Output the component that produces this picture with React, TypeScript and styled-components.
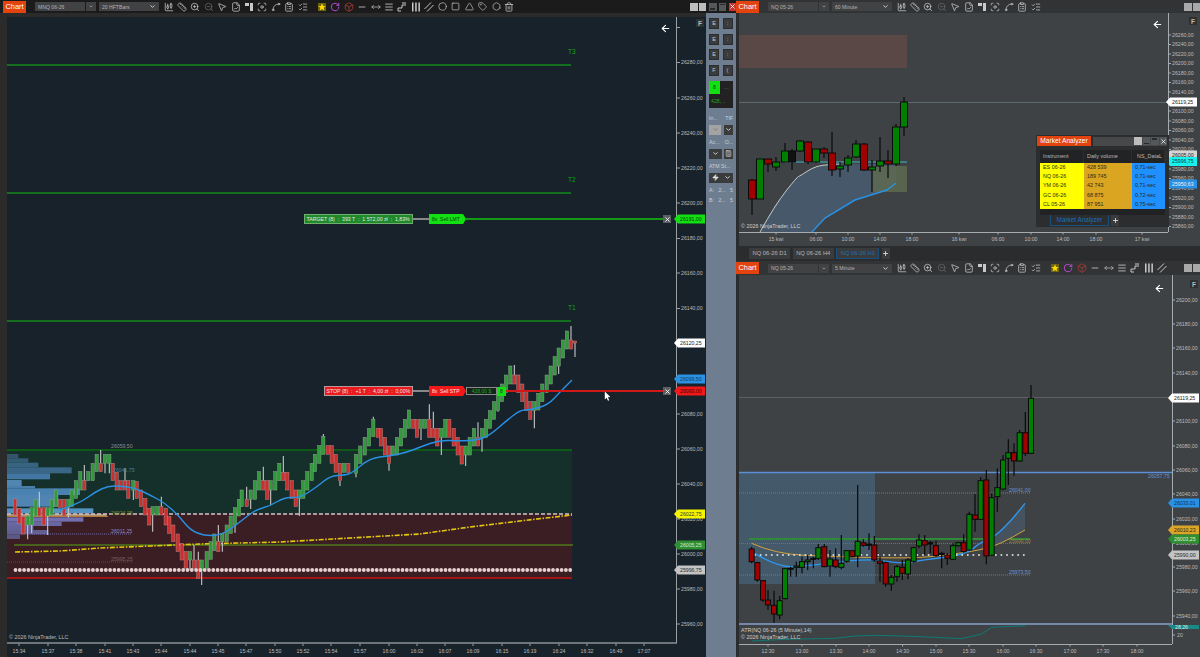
import React from 'react';
import styled, { createGlobalStyle } from 'styled-components';
import {
  ArrowLeft, Box, Calculator, ChartCandlestick, ChevronDown, ClipboardList, FileChartLine, Focus,
  Hexagon, ListChecks, Menu, Minus, MousePointer2, MoveHorizontal, Plus, RotateCw, Ruler, Spline,
  Square, Tag, Trash2, Triangle, Circle, X, Zap, ZoomIn, ZoomOut,
} from 'lucide-react';

const GlobalStyle = createGlobalStyle`
  html, body { margin: 0; padding: 0; background: #1c1c1c; }
  * { box-sizing: border-box; }
`;

const Page = styled.div`
  display: flex;
  width: 1200px;
  height: 657px;
  overflow: hidden;
  font-family: 'Liberation Sans', Arial, sans-serif;
`;

const LeftWindow = styled.div`
  display: flex;
  flex-direction: column;
  width: 736px;
  flex: none;
  background: #2b2b2c;
`;

const RightColumn = styled.div`
  position: relative;
  display: flex;
  flex-direction: column;
  flex: 1;
  min-width: 0;
  background: #2b2c2e;
`;

const Bar = styled.div<{ $dark?: boolean; $h: number; $pad: number }>`
  display: flex;
  align-items: center;
  flex: none;
  height: ${p => p.$h}px;
  padding-left: ${p => p.$pad}px;
  background: ${p => (p.$dark ? '#1b1b1c' : '#313335')};
  overflow: hidden;
`;

const ChartTab = styled.div`
  flex: none;
  width: 23px;
  height: 12px;
  background: #e2430f;
  color: #fff;
  font-size: 7.4px;
  line-height: 12px;
  text-align: center;
`;

const Combo = styled.div<{ $w: number; $ml: number }>`
  display: flex;
  align-items: center;
  justify-content: space-between;
  flex: none;
  width: ${p => p.$w}px;
  height: 9px;
  margin-left: ${p => p.$ml}px;
  padding: 0 3px;
  background: #414244;
  color: #b5b5b5;
  font-size: 5.1px;
  svg { color: #d8d8d8; }
`;

const ToolGroup = styled.div<{ $ml: number }>`
  display: flex;
  flex: none;
  margin-left: ${p => p.$ml}px;
`;

const ToolCell = styled.span<{ $c?: string }>`
  display: flex;
  align-items: center;
  justify-content: center;
  width: 13.4px;
  height: 12px;
  color: ${p => p.$c || '#c9c9c9'};
`;

const WindowButtons = styled.div`
  display: flex;
  align-items: center;
  gap: 1px;
  margin-left: auto;
  flex: none;
`;

const WinBtn = styled.div<{ $c?: string; $ml?: number }>`
  display: flex;
  align-items: center;
  justify-content: center;
  width: 7.5px;
  height: 8px;
  margin-left: ${p => p.$ml || 0}px;
  background: ${p => p.$c || '#bdbdbd'};
  color: #fff;
`;

const WinGlyph = styled.div<{ $top?: boolean }>`
  width: 5px;
  height: 1.5px;
  background: #2a2a2a;
  align-self: ${p => (p.$top ? 'flex-start' : 'flex-end')};
  margin: 1px 0;
`;

const Body = styled.div`
  position: relative;
  display: flex;
  flex: 1;
  min-height: 0;
`;

const ChartPane = styled.div`
  position: relative;
  flex: 1;
  margin: 4px 0 0 7px;
  background: #18222a;
`;

const ChartSvg = styled.svg`
  display: block;
`;

const RightChart = styled.div<{ $h: number }>`
  flex: none;
  height: ${p => p.$h}px;
  padding-left: 3px;
  background: #2b2c2e;
`;

const ChartText = styled.text<{ $c?: string; $s?: number }>`
  font-family: 'Liberation Sans', Arial, sans-serif;
  font-size: ${p => p.$s || 5.2}px;
  fill: ${p => p.$c || '#bcbcbc'};
`;

const FBox = styled.div<{ $left: number; $top: number }>`
  position: absolute;
  left: ${p => p.$left}px;
  top: ${p => p.$top}px;
  display: flex;
  align-items: center;
  justify-content: center;
  width: 8px;
  height: 8px;
  background: #2f3030;
  color: #bbb;
  font-size: 6.5px;
  font-weight: bold;
`;

const BackArrow = styled.div<{ $left: number; $top: number }>`
  position: absolute;
  left: ${p => p.$left}px;
  top: ${p => p.$top}px;
  color: #fff;
  line-height: 0;
`;

const OrderRow = styled.div<{ $left: number; $top: number }>`
  position: absolute;
  left: ${p => p.$left}px;
  top: ${p => p.$top}px;
  display: flex;
  align-items: center;
  height: 10px;
`;

const OrderBox = styled.div<{ $w: number; $bg: string; $edge: string }>`
  width: ${p => p.$w}px;
  height: 10px;
  background: ${p => p.$bg};
  border: 1px solid ${p => p.$edge};
  color: #e8e8e8;
  font-size: 5.2px;
  line-height: 8px;
  padding-left: 1.5px;
  white-space: pre;
  overflow: hidden;
`;

const Connector = styled.div`
  width: 16px;
  height: 1.5px;
  background: #888;
`;

const OrderFlag = styled.div<{ $bg: string; $c: string }>`
  width: 37px;
  height: 10px;
  background: ${p => p.$bg};
  color: ${p => p.$c};
  font-size: 5px;
  line-height: 10px;
  padding-left: 3px;
  white-space: pre;
  clip-path: polygon(0 0, 92% 0, 100% 50%, 92% 100%, 0 100%);
`;

const PnlBox = styled.div`
  width: 31px;
  height: 8px;
  background: #16251c;
  border: 1px solid #8a8a8a;
  color: #1ca51c;
  font-size: 5px;
  line-height: 6px;
  text-align: center;
`;

const PnlQty = styled.div`
  width: 9px;
  height: 9px;
  background: #13e013;
  color: #123;
  font-size: 5px;
  line-height: 9px;
  text-align: center;
`;

const CloseBox = styled.div<{ $left: number; $top: number }>`
  position: absolute;
  left: ${p => p.$left}px;
  top: ${p => p.$top}px;
  display: flex;
  align-items: center;
  justify-content: center;
  width: 8px;
  height: 8px;
  background: #5b5f64;
  color: #fff;
`;

const TraderPanel = styled.div`
  display: flex;
  flex-direction: column;
  width: 30px;
  flex: none;
  padding: 5px 3px 0;
  background: #6e7e90;
`;

const QtyGrid = styled.div`
  display: grid;
  grid-template-columns: 10px 10px;
  grid-auto-rows: 11px;
  column-gap: 3.5px;
  row-gap: 4.5px;
`;

const QtyBtn = styled.div`
  background: #3a3b3d;
  border: 1px solid #2c2d2f;
  color: #ccc;
  font-size: 5.5px;
  line-height: 9px;
  text-align: center;
`;

const PositionBox = styled.div`
  display: grid;
  grid-template-columns: 11px 13px;
  grid-template-rows: 13px 14px;
  width: 24px;
  margin-top: 5px;
  background: #222;
  font-size: 5.2px;
`;

const PosQty = styled.div`
  background: #13e013;
  color: #0d3d0d;
  line-height: 13px;
  text-align: center;
`;

const PosMore = styled.div`
  color: #888;
  line-height: 13px;
  text-align: center;
`;

const PosPnl = styled.div`
  grid-column: 1 / 3;
  color: #1ca51c;
  line-height: 14px;
  padding-left: 2px;
`;

const FieldLabels = styled.div<{ $mt: number }>`
  display: flex;
  justify-content: space-between;
  margin-top: ${p => p.$mt}px;
  color: #c9d0d8;
  font-size: 5.2px;
  line-height: 7px;
  white-space: nowrap;
`;

const FieldRow = styled.div`
  display: flex;
  justify-content: space-between;
  margin-top: 3px;
  height: 10px;
`;

const FieldBtn = styled.div<{ $w: number; $light?: boolean }>`
  display: flex;
  align-items: center;
  justify-content: space-around;
  width: ${p => p.$w}px;
  background: ${p => (p.$light ? '#a3a3a3' : '#3a3b3d')};
  color: ${p => (p.$light ? '#777' : '#e4e4e4')};
`;

const TabStrip = styled.div`
  display: flex;
  align-items: center;
  flex: none;
  height: 16px;
  padding-left: 13px;
  gap: 2.5px;
`;

const ChartTabItem = styled.div<{ $active?: boolean }>`
  height: 11px;
  padding: 0 3.5px;
  background: #3a3b3d;
  border: ${p => (p.$active ? '1px solid #1c4f7c' : '0')};
  border-top-width: 0;
  color: ${p => (p.$active ? '#1b70b8' : '#b5b5b5')};
  font-size: 5.8px;
  line-height: 11px;
  white-space: nowrap;
`;

const AddTab = styled.div`
  display: flex;
  align-items: center;
  justify-content: center;
  width: 8px;
  height: 11px;
  background: #3a3b3d;
  color: #ddd;
`;

const Analyzer = styled.div`
  position: absolute;
  left: 300px;
  top: 135px;
  display: flex;
  flex-direction: column;
  width: 133px;
  height: 92px;
  padding: 1px 2px 0 1px;
  background: #2c2d2f;
`;

const AnalyzerTitle = styled.div`
  display: flex;
  align-items: center;
  height: 10px;
`;

const AnalyzerTab = styled.div`
  width: 54px;
  height: 10px;
  background: #e2430f;
  color: #fff;
  font-size: 6.6px;
  line-height: 10px;
  text-align: center;
`;

const AnalyzerHandle = styled.div`
  display: flex;
  align-items: center;
  justify-content: flex-end;
  gap: 1px;
  flex: 1;
  height: 9px;
  margin-left: 2px;
  background: #47484a;
`;

const Table = styled.div`
  display: grid;
  grid-template-columns: 44px 48px 33px;
  margin: 4px 0 0 3px;
  font-size: 5.4px;
`;

const HeadCell = styled.div<{ $center?: boolean }>`
  height: 13px;
  margin-right: 1px;
  padding-left: 3px;
  background: #222325;
  color: #b9b9b9;
  line-height: 13px;
  white-space: nowrap;
  text-align: ${p => (p.$center ? 'center' : 'left')};
`;

const Cell = styled.div<{ $bg: string }>`
  height: 9.2px;
  padding-left: 3px;
  background: ${p => p.$bg};
  color: #2a2a18;
  line-height: 9.2px;
`;

const TableFoot = styled.div`
  grid-column: 1 / 4;
  height: 6px;
  background: #212224;
`;

const AnalyzerTabs = styled.div`
  display: flex;
  align-items: center;
  gap: 2px;
  margin: 0 0 0 13px;
`;

const AnalyzerTabItem = styled.div`
  width: 59px;
  height: 11px;
  border: 1px solid #1c4f7c;
  border-top: 0;
  color: #1b70b8;
  font-size: 6.4px;
  line-height: 10px;
  text-align: center;
`;

type Bars = [number, number, number, string, number?][];

// renko bars read off the chart: x, body top, body bottom, colour, wick end
const barsA: Bars = [
  [45,177,225,'r'],[58,205,250,'r'],[70,230,282,'r'],[83,228,255,'g',298],[95,203,255,'g',280],[107,178,228,'g'],[118,203,228,'r',155],
  [131,203,255,'r'],[143,203,228,'g',285],[155,178,225,'g'],[168,150,200,'g'],[180,178,203,'r'],[192,178,228,'r'],[205,178,203,'g',233],
  [215,150,200,'g'],[228,122,175,'g'],[241,95,150,'g'],[253,122,150,'r',75],[265,95,122,'g'],[278,70,122,'g'],[290,43,95,'g'],
  [302,70,95,'r',30],[315,43,70,'g',100],[328,43,70,'g',100],[338,70,122,'r'],[350,97,150,'r'],[362,122,150,'r'],[375,122,150,'r',85],
  [385,122,175,'r'],[400,122,150,'g',180],[410,125,175,'r'],[423,150,200,'r'],[436,175,225,'r'],[448,205,255,'r'],[458,200,225,'g',275],
  [472,200,225,'g'],[484,200,225,'r',170],[497,205,255,'r'],[508,230,280,'r'],[520,255,305,'r'],[533,282,335,'r'],[545,310,360,'r'],
  [557,335,385,'r'],[570,335,360,'g',390],[582,360,385,'r',315],[595,360,415,'r',335],[605,360,390,'g',435],[620,335,385,'g'],
  [632,305,358,'g'],[643,282,332,'g'],[655,305,335,'r',255],[667,280,305,'g',335],[680,255,305,'g'],[692,228,280,'g'],[705,203,255,'g',278],
  [717,178,228,'g'],[725,150,200,'g'],[740,178,200,'r',140],[752,150,178,'g',207],[765,122,178,'g'],[777,95,150,'g'],[790,122,150,'r',80],
  [802,122,178,'r'],[812,122,150,'g',195],[826,95,150,'g'],[838,70,122,'g'],[850,97,122,'r',48],[862,97,150,'r'],[875,122,175,'r'],
  [887,150,200,'r'],[898,150,175,'g',228],[910,122,175,'g'],[922,95,150,'g'],[935,70,122,'g'],[945,43,95,'g'],[958,17,70,'g'],[970,-10,43,'g',-18],
  [983,17,43,'r'],[995,17,70,'r'],[1007,43,97,'r'],[1020,70,122,'r',138],[1032,70,97,'g'],[1045,70,97,'r'],
];

const barsB: Bars = [
  [18,283,340,'g',352],[31,258,310,'g'],[44,232,285,'g'],[57,205,258,'g'],[70,178,230,'g',170],[83,205,232,'r'],[93,205,258,'r'],
  [105,232,285,'r'],[117,258,310,'r',332],[128,258,285,'g'],[141,232,285,'g'],[153,205,258,'g'],[165,178,232,'g'],[177,150,205,'g'],
  [190,178,205,'r'],[201,178,232,'r'],[213,178,205,'g',240],[225,178,205,'g'],[238,178,232,'r',133],[250,205,232,'r',155],[262,205,258,'r'],
  [274,205,232,'g',285],[286,178,232,'g'],[298,178,232,'r'],[311,205,258,'r'],[323,232,285,'r'],[335,258,312,'r'],[347,258,285,'g',318],
  [359,232,285,'g'],[372,205,258,'g'],[384,232,258,'r',187],[396,205,232,'g',275],[408,178,232,'g'],[420,152,205,'g'],[432,125,178,'g'],
  [444,98,152,'g',155],[456,72,125,'g'],[468,45,98,'g'],[481,18,72,'g'],[493,45,72,'r',15],[505,45,98,'r'],[517,72,125,'r'],[529,98,152,'r'],
  [541,125,178,'r'],[553,125,152,'g',205],[565,100,150,'g'],[577,72,125,'g'],[590,45,98,'g'],[602,18,72,'g'],[614,-10,45,'g'],[626,-36,18,'g',42],
];

const barsC: Bars = [[563,340,358,'g'],[567,331,349,'g'],[571,340,349,'r',326],[575,341,343,'r',357]];

const renkoBars = [
  ...barsA.map(([x, t, b, c, w]) => ({ x: x / 3, t: 440 + t / 3, b: 440 + b / 3, c, w: w === undefined ? undefined : 440 + w / 3 })),
  ...barsB.map(([x, t, b, c, w]) => ({ x: 350 + x / 3, t: 360 + t / 3, b: 360 + b / 3, c, w: w === undefined ? undefined : 360 + w / 3 })),
  ...barsC.map(([x, t, b, c, w]) => ({ x, t, b, c, w })),
];

const profileRows: [number, number, number, string][] = [
  [42,13,55,'#365a72'],[55,13,85,'#37607c'],[68,14,115,'#3b6a8a'],[82,18,215,'#3d6d90'],[100,18,150,'#4780b0'],[120,18,65,'#5690bf'],
  [138,7,105,'#4f88b8'],[145,20,240,'#4f8cc0'],[165,35,175,'#568fc2'],[205,15,280,'#5b9dd0'],[222,8,320,'#c09a78'],[232,13,250,'#7a78c0'],
  [245,13,185,'#6f6fb0'],[258,12,100,'#6a6aa8'],[270,13,145,'#66669f'],[283,14,60,'#5f5f8f'],
];

const targets: [number, string, number][] = [[65, 'T3', 52], [193, 'T2', 180], [321, 'T1', 308]];

const pts = (a: number[][]) => a.map(p => p.join(',')).join(' ');
const fromZoom = (a: number[][]) => a.map(([x, y]) => [735 + x / 3, 380 + y / 3]);

// rounds a point list into a curve through the midpoints
const smooth = (a: number[][]) => {
  let d = `M${a[0][0]} ${a[0][1]}`;
  for (let i = 1; i < a.length - 1; i++) {
    const mx = (a[i][0] + a[i + 1][0]) / 2;
    const my = (a[i][1] + a[i + 1][1]) / 2;
    d += ` Q${a[i][0]} ${a[i][1]} ${mx} ${my}`;
  }
  const last = a[a.length - 1];
  return `${d} L${last[0]} ${last[1]}`;
};

const blueLine = [[60,510],[80,503],[95,492],[108,486],[120,486],[135,488],[150,495],[165,503],[180,517],[190,530],[205,536],[222,535],[240,522],[255,510],[270,506],[285,497],[300,498],[318,486],[330,476],[345,475],[352,473],[370,458],[390,456],[408,452],[420,447],[440,440],[460,441],[478,440],[490,435],[505,422],[520,410],[530,410],[548,405],[560,392],[572,380]];
const yellowLine = [[15,552],[60,551],[100,548],[150,546],[200,544],[280,542],[350,538],[420,534],[470,527],[520,521],[572,515]];

const leftAxis: [number, string][] = [[62.5,'26280,00'],[98,'26260,00'],[133,'26240,00'],[168,'26220,00'],[203,'26200,00'],[238.5,'26180,00'],[273,'26160,00'],[308.5,'26140,00'],[414,'26080,00'],[449,'26060,00'],[484,'26040,00'],[519,'26020,00'],[554,'26000,00'],[589,'25980,00'],[624,'25960,00']];
const leftTimes: [number, string][] = [[19,'15:34'],[48,'15:37'],[76,'15:38'],[105,'15:41'],[133,'15:43'],[161,'15:44'],[190,'15:44'],[218,'15:45'],[246,'15:47'],[275,'15:50'],[303,'15:52'],[331,'15:54'],[360,'15:57'],[389,'16:00'],[417,'16:02'],[445,'16:07'],[473,'16:09'],[502,'16:15'],[530,'16:19'],[559,'16:24'],[587,'16:32'],[616,'16:49'],[644,'17:07']];

const topAxis: [number, string][] = [[35,'26260,00'],[44.5,'26240,00'],[54,'26220,00'],[63.5,'26200,00'],[73,'26180,00'],[82.5,'26160,00'],[92,'26140,00'],[111,'26100,00'],[121,'26080,00'],[130.5,'26060,00'],[140,'26040,00'],[149.5,'26020,00'],[169,'25980,00'],[178.5,'25960,00'],[188.5,'25940,00'],[198,'25920,00'],[207.5,'25900,00'],[217,'25880,00'],[226.5,'25860,00']];
const topTimes: [number, string][] = [[776,'15 kwi'],[816,'06:00'],[848,'10:00'],[880,'14:00'],[912,'18:00'],[959,'16 kwi'],[998,'06:00'],[1031,'10:00'],[1063,'14:00'],[1096,'18:00'],[1142,'17 kwi']];

const bottomAxis: [number, string][] = [[300,'26200,00'],[324,'26180,00'],[348,'26160,00'],[373,'26140,00'],[421,'26100,00'],[446,'26080,00'],[470,'26060,00'],[494,'26040,00'],[519,'26020,00'],[543.5,'26000,00'],[567,'25980,00'],[591,'25960,00'],[616,'25940,00']];
const bottomTimes: [number, string][] = [[768,'12:30'],[802,'13:00'],[836,'13:30'],[869,'14:00'],[902.6,'14:30'],[936,'15:00'],[969,'15:30'],[1003,'16:00'],[1036,'16:30'],[1070,'17:00'],[1103,'17:30'],[1137,'18:00']];

// x, body top, body bottom, colour, wick top, wick bottom (all real px)
const hourCandles: [number, number, number, string, number, number][] = [
  [752,180,199,'r',179,215],[760,159,199,'g',159,199],[768,159,164,'r',159,172],[776,162,167,'g',157,171],[785,151,162,'g',143,162],
  [792,151,162,'b',149,170],[800,141,151,'g',140,152],[808,142,162,'r',141,164],[816,149,162,'g',149,163],[824,149,153,'r',147,158],
  [832,153,170,'r',132,176],[840,166,169,'g',162,177],[848,158,165,'g',155,172],[856,144,157,'g',140,158],[864,144,170,'r',143,171],
  [872,167,170,'g',160,192],[880,161,166,'g',137,172],[888,161,164,'r',150,178],[896,127,164,'g',124,166],[904,102,127,'g',97,136],
];

// same, read off the zoomed crop of the 5 minute chart
const minuteCandles: [number, number, number, string, number, number][] = [
  [50,507,545,'r',500,550],[67,548,600,'r',545,605],[84,602,660,'r',600,665],[99,660,675,'r',630,690],[117,676,702,'r',632,728],
  [134,662,705,'g',648,718],[150,566,656,'g',565,658],[167,565,568,'g',560,590],[184,558,562,'g',545,590],[201,545,562,'g',530,580],
  [218,540,545,'g',525,570],[235,535,538,'b',530,565],[250,503,535,'g',492,540],[268,500,560,'r',492,562],[285,537,558,'g',510,590],
  [302,540,560,'r',505,565],[319,550,562,'g',465,568],[335,512,544,'g',510,548],[352,512,530,'r',510,532],[368,484,528,'g',315,562],
  [385,488,496,'r',478,500],[402,492,496,'b',460,510],[418,495,540,'r',468,545],[435,543,550,'r',530,605],[452,548,612,'r',545,620],
  [469,592,612,'g',585,632],[486,560,590,'g',555,605],[502,562,580,'r',540,600],[519,540,582,'g',535,598],[536,503,544,'g',500,548],
  [552,480,498,'g',463,505],[569,482,495,'r',465,524],[586,488,492,'b',483,520],[603,497,527,'r',482,530],[620,520,524,'b',515,565],
  [637,525,535,'r',520,555],[654,497,538,'g',490,540],[670,488,497,'g',485,500],[686,488,515,'r',463,518],[703,403,510,'g',395,512],
  [720,405,418,'r',342,455],[737,302,418,'g',292,420],[754,300,528,'r',270,553],[770,353,526,'g',340,528],[787,323,350,'g',265,395],
  [804,240,327,'g',225,330],[820,218,235,'g',178,315],[837,218,243,'r',190,287],[854,158,243,'g',150,245],[871,158,220,'r',96,228],
  [888,55,220,'g',15,222],
];

const candleFill: Record<string, string> = { g: '#008000', r: '#a00000', b: '#111' };

const Candles = ({ data, w, map }: { data: typeof hourCandles; w: number; map: (x: number, y: number) => [number, number] }) => (
  <g stroke="#0a0a0a" strokeWidth={1}>
    {data.map(([x, t, b, c, wt, wb], i) => {
      const [cx, top] = map(x, t);
      const [, bot] = map(x, b);
      const [, wTop] = map(x, wt);
      const [, wBot] = map(x, wb);
      return (
        <g key={i}>
          <line x1={cx} x2={cx} y1={wTop} y2={wBot} strokeWidth={1.2} />
          <rect x={cx - w / 2} y={top} width={w} height={bot - top} fill={candleFill[c]} />
        </g>
      );
    })}
  </g>
);

const PriceTag = ({ x, y, bg, fg, label }: { x: number; y: number; bg: string; fg: string; label: string }) => (
  <g>
    <polygon points={`${x},${y} ${x + 4},${y - 4.5} ${x + 31},${y - 4.5} ${x + 31},${y + 4.5} ${x + 4},${y + 4.5}`} fill={bg} />
    <ChartText x={x + 6} y={y + 1.9} $c={fg}>{label}</ChartText>
  </g>
);

const AxisLabels = ({ x, data, tick }: { x: number; data: [number, string][]; tick: string }) => (
  <g>
    {data.map(([y, label]) => (
      <g key={y}>
        <line x1={x} x2={x + 3} y1={y} y2={y} stroke={tick} />
        <ChartText x={x + 4} y={y + 1.9}>{label}</ChartText>
      </g>
    ))}
  </g>
);

const TimeLabels = ({ y, data, tick }: { y: number; data: [number, string][]; tick: string }) => (
  <g>
    {data.map(([x, label]) => (
      <g key={x}>
        <line x1={x} x2={x} y1={y} y2={y + 2.5} stroke={tick} />
        <ChartText x={x} y={y + 9} textAnchor="middle">{label}</ChartText>
      </g>
    ))}
  </g>
);

const MainPlot = () => (
  <ChartSvg width={699} height={640} viewBox="7 17 699 640">
    <rect x={7} y={450} width={565} height={63} fill="#15302a" />
    <rect x={7} y={513} width={565} height={65} fill="#3a1e24" />
    {profileRows.map(([y, h, w, c]) => (
      <rect key={y} x={7} y={440 + y / 3} width={w / 3 - 7} height={h / 3} fill={c} opacity={0.9} />
    ))}
    <line x1={7} x2={572} y1={450} y2={450} stroke="#0d5a18" strokeWidth={2} />
    <line x1={7} x2={572} y1={578} y2={578} stroke="#a51414" strokeWidth={2} />
    <line x1={7} x2={572} y1={514} y2={514} stroke="#c9c9c9" strokeWidth={1.6} strokeDasharray="4 2" />
    <line x1={7} x2={108} y1={516.5} y2={516.5} stroke="#b07a3a" strokeWidth={1} />
    <line x1={30} x2={132} y1={534} y2={534} stroke="#7d7cc4" strokeWidth={0.8} strokeDasharray="1 1" />
    <line x1={7} x2={132} y1={562} y2={562} stroke="#7a4a4a" strokeWidth={0.8} strokeDasharray="1 1" />
    <line x1={14} x2={573} y1={545} y2={545} stroke="#4f7a18" strokeWidth={1.6} />
    {targets.map(([y, t, ty]) => (
      <g key={t}>
        <line x1={7} x2={571} y1={y} y2={y} stroke="#128a1c" strokeWidth={1.4} />
        <ChartText x={568} y={ty + 2} $c="#12a812" $s={6.5}>{t}</ChartText>
      </g>
    ))}
    <polyline points={pts(yellowLine)} fill="none" stroke="#e4c60e" strokeWidth={1.6} strokeDasharray="5 1.5 1.5 1.5" />
    <g>
      {renkoBars.map((b, i) => (
        <g key={i}>
          {b.w !== undefined && (
            <line x1={b.x} x2={b.x} y1={b.w < b.t ? b.w : b.b} y2={b.w < b.t ? b.t : b.w} stroke="#c8c8c8" strokeWidth={1.1} />
          )}
          <rect x={b.x - 1.6} y={b.t} width={3.2} height={b.b - b.t} fill={b.c === 'g' ? '#2f9a3a' : '#c9302f'} stroke={b.c === 'g' ? '#8aa58c' : '#b08a8a'} strokeWidth={0.5} />
        </g>
      ))}
    </g>
    <path d={smooth(blueLine)} fill="none" stroke="#2a90e2" strokeWidth={1.4} />
    <g fill="#e6d0d0">
      {Array.from({ length: 130 }, (_, i) => <circle key={i} cx={15.5 + i * 4.3} cy={570} r={1.9} />)}
    </g>
    <ChartText x={111} y={447.5} $c="#8c8c8c">26059,50</ChartText>
    <ChartText x={113} y={472} $c="#4f7f9f">26041,75</ChartText>
    <ChartText x={111} y={514.5} $c="#8a8a2a">26024,25</ChartText>
    <ChartText x={111} y={533} $c="#8d8cc8">26011,25</ChartText>
    <ChartText x={111} y={560.5} $c="#7f6060">25995,25</ChartText>
    <ChartText x={9} y={639} $s={5.4}>© 2026 NinjaTrader, LLC</ChartText>
    <line x1={466} x2={664} y1={219} y2={219} stroke="#149a14" strokeWidth={2} />
    <line x1={506} x2={664} y1={391} y2={391} stroke="#d01818" strokeWidth={1.8} />
    <path d="M604.8 391.5 l0 8 l1.8 -1.7 l1.4 3 l1.2 -.6 l-1.3 -2.9 l2.4 -.2 z" fill="#fff" />
    <line x1={676.5} x2={676.5} y1={17} y2={643} stroke="#9a9fa3" strokeWidth={1} />
    <line x1={7} x2={677} y1={643} y2={643} stroke="#8b9095" strokeWidth={1.4} />
    <line x1={677} x2={680} y1={27.5} y2={27.5} stroke="#9a9fa3" />
    <AxisLabels x={677} data={leftAxis} tick="#9a9fa3" />
    <TimeLabels y={643.5} data={leftTimes} tick="#9a9fa3" />
    <PriceTag x={674} y={219} bg="#13e013" fg="#0c3a0c" label="26191,00" />
    <PriceTag x={674} y={343} bg="#fff" fg="#222" label="26120,25" />
    <PriceTag x={674} y={379} bg="#2a90e2" fg="#103a60" label="26099,50" />
    <PriceTag x={674} y={391} bg="#f01818" fg="#3a0505" label="26093,00" />
    <PriceTag x={674} y={514} bg="#f5f500" fg="#333" label="26022,75" />
    <PriceTag x={674} y={545} bg="#2f8f30" fg="#d8e8d8" label="26005,25" />
    <PriceTag x={674} y={570} bg="#c4c4c4" fg="#2a2a2a" label="25996,75" />
  </ChartSvg>
);

const HourPlot = () => (
  <ChartSvg width={461} height={233} viewBox="739 13 461 233">
    <rect x={739} y={13} width={461} height={233} fill="#3e4244" />
    <rect x={739} y={35} width={168} height={33} fill="#5a4846" />
    <line x1={739} x2={1168} y1={102.5} y2={102.5} stroke="#5f6a70" />
    <polygon points="760,232 775,205 797,177 812,168 828,164 896,164 896,183 887,190 855,200 825,218 812,232" fill="#47586a" />
    <rect x={872} y={166} width={35} height={26} fill="#5d6a50" opacity={0.85} />
    <path d={smooth([[760,232],[775,205],[797,177],[800,176],[812,168],[822,165],[840,164]])} fill="none" stroke="#c3c7c7" strokeWidth={1} />
    <line x1={785} x2={907} y1={162} y2={162} stroke="#3fb6c0" strokeWidth={1} />
    <polyline points="812,232 825,218 855,200 887,190 896,183" fill="none" stroke="#2a90e2" strokeWidth={1.5} />
    <Candles data={hourCandles} w={7} map={(x, y) => [x, y]} />
    <ChartText x={741} y={228} $s={5.4} $c="#d0d0d0">© 2026 NinjaTrader, LLC</ChartText>
    <line x1={1168.5} x2={1168.5} y1={13} y2={232} stroke="#a6abaf" />
    <line x1={739} x2={1168} y1={232.5} y2={232.5} stroke="#a6abaf" />
    <AxisLabels x={1168} data={topAxis} tick="#a6abaf" />
    <TimeLabels y={232} data={topTimes} tick="#a6abaf" />
    <PriceTag x={1166} y={102} bg="#fff" fg="#222" label="26119,25" />
    <PriceTag x={1166} y={155} bg="#d4d4d4" fg="#222" label="26005,00" />
    <PriceTag x={1166} y={161.5} bg="#19f0f0" fg="#0d3d3d" label="25996,75" />
    <PriceTag x={1166} y={184} bg="#2a90e2" fg="#eaf4ff" label="25950,63" />
  </ChartSvg>
);

const MinutePlot = () => (
  <ChartSvg width={461} height={382} viewBox="739 275 461 382">
    <rect x={739} y={275} width={461} height={382} fill="#3e4244" />
    <rect x={739} y={473} width={136} height={111} fill="#44596a" />
    <line x1={739} x2={1172} y1={397.5} y2={397.5} stroke="#5a6060" />
    <line x1={739} x2={1172} y1={472.5} y2={472.5} stroke="#5b8fd8" strokeWidth={1.4} />
    <line x1={739} x2={1030} y1={493} y2={493} stroke="#5b7fb8" strokeDasharray="1 1" />
    <line x1={739} x2={1030} y1={575} y2={575} stroke="#5b7fb8" strokeDasharray="1 1" />
    <line x1={749} x2={1030} y1={539} y2={539} stroke="#2f8a3a" strokeWidth={1.8} />
    <line x1={739} x2={1030} y1={543.5} y2={543.5} stroke="#80703c" strokeDasharray="1 1" />
    <polygon points={pts(fromZoom([[740,485],[780,470],[830,420],[870,370],[870,450],[800,490],[740,510]]))} fill="#46535f" />
    <path d={smooth(fromZoom([[50,490],[120,522],[300,530],[500,535],[600,530],[740,510],[800,490],[870,450]]))} fill="none" stroke="#d3a33c" strokeWidth={1} />
    <path d={smooth(fromZoom([[60,520],[130,565],[240,555],[400,535],[500,552],[560,540],[690,525],[740,485],[780,470],[830,420],[870,370]]))} fill="none" stroke="#2f97f0" strokeWidth={1.4} />
    <g fill="#d8d8d8">
      {Array.from({ length: 49 }, (_, i) => <circle key={i} cx={755 + i * 5.6} cy={555} r={1} />)}
    </g>
    <Candles data={minuteCandles} w={5} map={(x, y) => [735 + x / 3, 380 + y / 3]} />
    <ChartText x={1148} y={478} $c="#6a93d8">26057,75</ChartText>
    <ChartText x={1009} y={491.5} $c="#6a93d8">26041,00</ChartText>
    <ChartText x={1009} y={573.5} $c="#6a93d8">25973,50</ChartText>
    <ChartText x={1009} y={543} $c="#a08a4a">25999,00</ChartText>
    <rect x={739} y={624} width={461} height={33} fill="#3e4244" />
    <line x1={739} x2={1172} y1={624} y2={624} stroke="#8aa0cc" strokeWidth={1.6} />
    <polyline points={pts(fromZoom([[50,783],[150,778],[300,775],[360,768],[420,766],[500,768],[600,772],[680,776],[740,762],[770,742],[870,737]]))} fill="none" stroke="#0f7a75" />
    <ChartText x={741} y={632} $s={5.4} $c="#d0d0d0">ATR(NQ 06-26 (5 Minute),14)</ChartText>
    <ChartText x={741} y={639} $s={5.4} $c="#d0d0d0">© 2026 NinjaTrader, LLC</ChartText>
    <line x1={1172.5} x2={1172.5} y1={275} y2={644} stroke="#a6abaf" />
    <line x1={739} x2={1172} y1={644.5} y2={644.5} stroke="#a6abaf" />
    <AxisLabels x={1172} data={bottomAxis} tick="#a6abaf" />
    <line x1={1172} x2={1175} y1={635} y2={635} stroke="#a6abaf" />
    <ChartText x={1177} y={637}>20</ChartText>
    <TimeLabels y={644} data={bottomTimes} tick="#a6abaf" />
    <PriceTag x={1168} y={398} bg="#fff" fg="#222" label="26119,25" />
    <PriceTag x={1168} y={503} bg="#2a90e2" fg="#0c3358" label="26033,01" />
    <PriceTag x={1168} y={530} bg="#dba52a" fg="#332505" label="26010,23" />
    <PriceTag x={1168} y={539} bg="#2f8f30" fg="#e0ecdf" label="26003,25" />
    <PriceTag x={1168} y={555} bg="#c4c4c4" fg="#2a2a2a" label="25990,00" />
    <polygon points="1168,625 1172,625 1199,625 1199,629 1172,629" fill="#1a8a86" />
    <ChartText x={1175} y={628.5} $c="#d8f0ee">28,26</ChartText>
  </ChartSvg>
);

const ArrowChoice = () => (
  <svg width="10" height="10" viewBox="0 0 10 10">
    <rect x="1" y="1" width="8" height="8" fill="#6a6410" />
    <path d="M5 1.2 6.1 4h2.7L6.6 5.7l.8 2.9L5 7l-2.4 1.6.8-2.9L1.2 4h2.7z" fill="#ffd800" />
  </svg>
);

const StepIcon = () => (
  <svg width="10" height="10" viewBox="0 0 10 10" fill="none" stroke="currentColor" strokeWidth="1">
    <path d="M1 9V6h4V3h4M5 1h4M1 9h3" />
  </svg>
);

const BarsIcon = () => (
  <svg width="10" height="10" viewBox="0 0 10 10" fill="currentColor">
    <rect x="1" y="0.5" width="1.5" height="9" />
    <rect x="4.2" y="0.5" width="1.5" height="9" />
    <rect x="7.4" y="0.5" width="1.5" height="9" />
  </svg>
);

const DiagonalIcon = () => (
  <svg width="10" height="10" viewBox="0 0 10 10" stroke="currentColor" strokeWidth="1">
    <path d="M0.5 7 7 0.5M3 9.5 9.5 3" />
  </svg>
);

const FlagIcon = () => (
  <svg width="10" height="10" viewBox="0 0 10 10" fill="currentColor">
    <rect x="6" y="1" width="3" height="8" />
    <rect x="1" y="1" width="4" height="3" />
  </svg>
);

const baseTools = [ChartCandlestick, Ruler, ZoomIn, ZoomOut, MousePointer2, FileChartLine, FlagIcon, Focus, Spline, ClipboardList, ListChecks];

const Toolbar = ({ instrument, interval, dark, h, pad, drawing, children }: {
  instrument: string; interval: string; dark?: boolean; h: number; pad: number; drawing?: boolean; children: React.ReactNode;
}) => (
  <Bar $dark={dark} $h={h} $pad={pad}>
    <ChartTab>Chart</ChartTab>
    <Combo $w={50} $ml={9}>{instrument}</Combo>
    <Combo $w={10} $ml={1}><ChevronDown size={7} strokeWidth={3} /></Combo>
    <Combo $w={60} $ml={3}>{interval}<ChevronDown size={7} strokeWidth={3} /></Combo>
    <ToolGroup $ml={3}>
      {baseTools.map((T, i) => (
        <ToolCell key={i} $c={i === 3 ? '#666' : undefined}><T size={10} strokeWidth={1.8} /></ToolCell>
      ))}
    </ToolGroup>
    {drawing && (
      <ToolGroup $ml={6}>
        <ToolCell><ArrowChoice /></ToolCell>
        <ToolCell $c="#b04ac8"><RotateCw size={10} strokeWidth={2.4} /></ToolCell>
        <ToolCell $c="#a83a30"><Box size={10} strokeWidth={2} /></ToolCell>
        <ToolCell><Minus size={10} strokeWidth={2} /></ToolCell>
        <ToolCell><MoveHorizontal size={10} strokeWidth={1.6} /></ToolCell>
        <ToolCell><Menu size={10} strokeWidth={2} /></ToolCell>
        <ToolCell><StepIcon /></ToolCell>
        <ToolCell><BarsIcon /></ToolCell>
        <ToolCell><DiagonalIcon /></ToolCell>
        {dark && (
          <>
            <ToolCell><Circle size={9} strokeWidth={1.8} /></ToolCell>
            <ToolCell><Square size={9} strokeWidth={1.8} /></ToolCell>
            <ToolCell><Triangle size={9} strokeWidth={1.8} /></ToolCell>
            <ToolCell><Tag size={9} strokeWidth={1.8} /></ToolCell>
            <ToolCell><Hexagon size={9} strokeWidth={1.8} /></ToolCell>
            <ToolCell><Trash2 size={10} strokeWidth={1.8} /></ToolCell>
          </>
        )}
      </ToolGroup>
    )}
    <WindowButtons>{children}</WindowButtons>
  </Bar>
);

const TraderSide = () => (
  <TraderPanel>
    <QtyGrid>
      {['E', ':', 'E', ':', 'E', ':', 'F', '('].map((t, i) => <QtyBtn key={i}>{t}</QtyBtn>)}
    </QtyGrid>
    <PositionBox>
      <PosQty>8</PosQty>
      <PosMore>...</PosMore>
      <PosPnl>428,...</PosPnl>
    </PositionBox>
    <FieldLabels $mt={7}><span>In...</span><span>TIF</span></FieldLabels>
    <FieldRow>
      <FieldBtn $w={12} $light><ChevronDown size={7} strokeWidth={3} /></FieldBtn>
      <FieldBtn $w={9}><ChevronDown size={7} strokeWidth={3} /></FieldBtn>
    </FieldRow>
    <FieldLabels $mt={4}><span>Ac...</span><span>O...</span></FieldLabels>
    <FieldRow>
      <FieldBtn $w={13}><ChevronDown size={7} strokeWidth={3} /></FieldBtn>
      <FieldBtn $w={9}><Calculator size={7} /></FieldBtn>
    </FieldRow>
    <FieldLabels $mt={4}><span>ATM St...</span></FieldLabels>
    <FieldRow>
      <FieldBtn $w={24}><Zap size={7} fill="#e4e4e4" /><ChevronDown size={7} strokeWidth={3} /></FieldBtn>
    </FieldRow>
    <FieldLabels $mt={4}><span>A:</span><span>2...</span><span>5</span></FieldLabels>
    <FieldLabels $mt={3}><span>B:</span><span>2...</span><span>5</span></FieldLabels>
  </TraderPanel>
);

const analyzerRows = [
  ['ES 06-26', '428 539', '0,71-sec'],
  ['NQ 06-26', '189 745', '0,71-sec'],
  ['YM 06-26', '42 743', '0,71-sec'],
  ['GC 06-26', '68 875', '0,72-sec'],
  ['CL 05-26', '87 951', '0,75-sec'],
];

const MarketAnalyzer = () => (
  <Analyzer>
    <AnalyzerTitle>
      <AnalyzerTab>Market Analyzer</AnalyzerTab>
      <AnalyzerHandle>
        <WinBtn />
        <WinBtn $c="#55585b"><WinGlyph /></WinBtn>
        <WinBtn $c="#55585b"><WinGlyph $top /></WinBtn>
        <WinBtn $c="#55585b"><X size={7} strokeWidth={2.5} /></WinBtn>
      </AnalyzerHandle>
    </AnalyzerTitle>
    <Table>
      <HeadCell>Instrument</HeadCell>
      <HeadCell>Daily volume</HeadCell>
      <HeadCell $center>NS_DataL</HeadCell>
      {analyzerRows.map(row => (
        <React.Fragment key={row[0]}>
          <Cell $bg="#ffff00">{row[0]}</Cell>
          <Cell $bg="#daa520">{row[1]}</Cell>
          <Cell $bg="#1e90ff">{row[2]}</Cell>
        </React.Fragment>
      ))}
      <TableFoot />
    </Table>
    <AnalyzerTabs>
      <AnalyzerTabItem>Market Analyzer</AnalyzerTabItem>
      <AddTab><Plus size={7} strokeWidth={3} /></AddTab>
    </AnalyzerTabs>
  </Analyzer>
);

const App = () => (
  <Page>
    <GlobalStyle />
    <LeftWindow>
      <Toolbar instrument="MNQ 06-26" interval="20 HFTBars" dark h={13} pad={3} drawing>
        <WinBtn />
        <WinBtn />
        <WinBtn $c="#55585b" $ml={2}><WinGlyph /></WinBtn>
        <WinBtn $c="#55585b" $ml={1}><WinGlyph $top /></WinBtn>
        <WinBtn $c="#c8342c" $ml={1.5}><X size={7} strokeWidth={3} /></WinBtn>
      </Toolbar>
      <Body>
        <ChartPane>
          <MainPlot />
          <BackArrow $left={653} $top={6}><ArrowLeft size={11} strokeWidth={2.4} /></BackArrow>
          <FBox $left={689} $top={2}>F</FBox>
          <OrderRow $left={297} $top={197}>
            <OrderBox $w={109} $bg="#1f8a2a" $edge="#6fae6f">{'TARGET (8)  :  393 T  :  1 572,00 zł  :  1,83%'}</OrderBox>
            <Connector />
            <OrderFlag $bg="#13e013" $c="#0c3a0c">{'8x  Sell LMT'}</OrderFlag>
          </OrderRow>
          <OrderRow $left={317} $top={369}>
            <OrderBox $w={89} $bg="#ea1a1f" $edge="#b99a9a">{'STOP (8)  :  +1 T  :  4,00 zł  :  0,00%'}</OrderBox>
            <Connector />
            <OrderFlag $bg="#f01818" $c="#ffe8e8">{'8x  Sell STP'}</OrderFlag>
            <PnlBox>428,00 $</PnlBox>
            <PnlQty>8</PnlQty>
          </OrderRow>
          <CloseBox $left={656} $top={198}><X size={7} strokeWidth={3} /></CloseBox>
          <CloseBox $left={656} $top={370}><X size={7} strokeWidth={3} /></CloseBox>
        </ChartPane>
        <TraderSide />
      </Body>
    </LeftWindow>
    <RightColumn>
      <Toolbar instrument="NQ 05-26" interval="60 Minute" h={13} pad={0}>
        <WinBtn $c="#a9a9a9" />
        <WinBtn $c="#a9a9a9" />
      </Toolbar>
      <RightChart $h={232}>
        <HourPlot />
      </RightChart>
      <TabStrip>
        <ChartTabItem>NQ 06-26 D1</ChartTabItem>
        <ChartTabItem>NQ 06-26 H4</ChartTabItem>
        <ChartTabItem $active>NQ 06-26 H1</ChartTabItem>
        <AddTab><Plus size={7} strokeWidth={3} /></AddTab>
      </TabStrip>
      <Toolbar instrument="NQ 05-26" interval="5 Minute" h={14} pad={0} drawing>
        <WinBtn $c="#a9a9a9" />
        <WinBtn $c="#a9a9a9" />
      </Toolbar>
      <RightChart $h={382}>
        <MinutePlot />
      </RightChart>
      <BackArrow $left={416} $top={19}><ArrowLeft size={11} strokeWidth={2.4} /></BackArrow>
      <FBox $left={453} $top={17}>F</FBox>
      <BackArrow $left={418} $top={283}><ArrowLeft size={11} strokeWidth={2.4} /></BackArrow>
      <FBox $left={454} $top={280}>F</FBox>
      <MarketAnalyzer />
    </RightColumn>
  </Page>
);

export default App;
